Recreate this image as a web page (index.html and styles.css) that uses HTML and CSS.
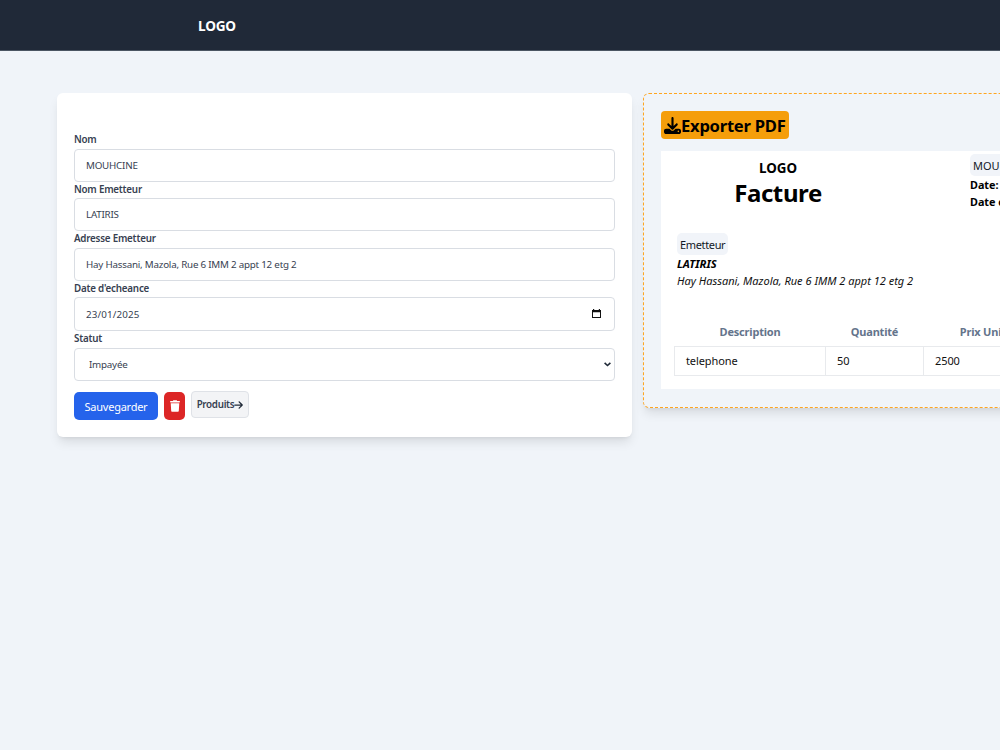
FILE: index.html
```html
<!DOCTYPE html>
<html lang="fr">
<head>
    <meta charset="UTF-8">
    <title>Facture</title>
    <link rel="stylesheet" href="styles.css">
</head>
<body>
    <nav class="navbar">
        <a class="logo">LOGO</a>
    </nav>

    <main class="page">
        <form class="formulaire">
            <label for="nom">Nom</label>
            <input type="text" id="nom" value="MOUHCINE">

            <label for="emetteur">Nom Emetteur</label>
            <input type="text" id="emetteur" value="LATIRIS">

            <label for="adresse">Adresse Emetteur</label>
            <input type="text" id="adresse" value="Hay Hassani, Mazola, Rue 6 IMM 2 appt 12 etg 2">

            <label for="echeance">Date d'echeance</label>
            <div class="champ champ-date">
                <input type="text" id="echeance" value="23/01/2025">
                <svg width="9" height="10" viewBox="0 0 9 10"><path fill="#111" fill-rule="evenodd" d="M1 0h1.200v1h4.600V0H8v1h1v8H0V1h1zM1 3.200V8h7V3.200z"/></svg>
            </div>

            <label for="statut">Statut</label>
            <div class="champ champ-statut">
                <select id="statut">
                    <option>Impayée</option>
                    <option>Payée</option>
                </select>
                <svg width="7" height="5" viewBox="0 0 7 5"><path fill="none" stroke="#1f2937" stroke-width="1.600" d="M.6.8l2.900 2.700L6.400.8"/></svg>
            </div>

            <div class="actions">
                <button type="button" class="btn-save">Sauvegarder</button>
                <button type="button" class="btn-delete">
                    <svg width="10" height="12" viewBox="0 0 448 512"><path fill="#fff" d="M135.200 17.700L128 32H32C14.300 32 0 46.300 0 64s14.300 32 32 32h384c17.700 0 32-14.300 32-32s-14.300-32-32-32h-96l-7.200-14.300C307.400 6.800 296.300 0 284.200 0H163.800c-12.100 0-23.200 6.800-28.600 17.700zM416 128H32l21.200 339c1.600 25.300 22.600 45 47.900 45h245.800c25.300 0 46.300-19.700 47.900-45z"/></svg>
                </button>
                <button type="button" class="btn-produits">Produits<svg width="9" height="10" viewBox="0 0 448 512"><path fill="#1f2937" d="M438.600 278.600c12.500-12.500 12.500-32.800 0-45.300l-160-160c-12.500-12.500-32.800-12.500-45.300 0s-12.500 32.800 0 45.300L338.800 224H32c-17.700 0-32 14.300-32 32s14.300 32 32 32h306.700L233.400 393.400c-12.500 12.500-12.500 32.800 0 45.300s32.800 12.500 45.300 0l160-160z"/></svg></button>
            </div>
        </form>

        <section class="apercu">
            <button type="button" class="btn-export">
                <svg width="17" height="17" viewBox="0 0 512 512"><path d="M288 32c0-17.700-14.300-32-32-32s-32 14.300-32 32v242.700l-73.400-73.400c-12.500-12.500-32.800-12.500-45.300 0s-12.500 32.800 0 45.300l128 128c12.500 12.500 32.800 12.500 45.300 0l128-128c12.500-12.500 12.500-32.800 0-45.300s-32.800-12.500-45.300 0L288 274.700zM64 352c-35.300 0-64 28.700-64 64v32c0 35.300 28.700 64 64 64h384c35.300 0 64-28.700 64-64v-32c0-35.300-28.700-64-64-64H346.500l-45.300 45.300c-25 25-65.500 25-90.500 0L165.500 352zm368 56a24 24 0 1 1 0 48 24 24 0 1 1 0-48z"/></svg><span>Exporter PDF</span>
            </button>

            <div class="facture">
                <header class="entete">
                    <div class="titre">
                        <h3>LOGO</h3>
                        <h1>Facture</h1>
                    </div>
                    <div class="infos">
                        <span class="badge">MOUHCINE</span>
                        <b>Date: 23/01/2025</b>
                        <b>Date d'echeance: 23/01/2025</b>
                    </div>
                </header>

                <div class="emetteur">
                    <span class="badge">Emetteur</span>
                    <strong>LATIRIS</strong>
                    <em>Hay Hassani, Mazola, Rue 6 IMM 2 appt 12 etg 2</em>
                </div>

                <table>
                    <thead>
                        <tr>
                            <th class="col-desc">Description</th>
                            <th class="col-qte">Quantité</th>
                            <th class="col-prix">Prix Unitaire</th>
                            <th>Total</th>
                        </tr>
                    </thead>
                    <tbody>
                        <tr>
                            <td>telephone</td>
                            <td>50</td>
                            <td>2500</td>
                            <td>125000</td>
                        </tr>
                    </tbody>
                </table>
            </div>
        </section>
    </main>
</body>
</html>
```
FILE: styles.css
```css
* {
    box-sizing: border-box;
}
body {
    margin: 0;
    height: 750px;
    overflow: hidden;
    background-color: #f0f4f9;
    font-family: "Noto Sans", "Open Sans", sans-serif;
    color: #000;
}
input, select, button {
    font-family: inherit;
}
h1, h3 {
    margin: 0;
}
svg {
    display: block;
    flex: none;
}
.navbar {
    height: 51px;
    padding-left: 198px;
    display: flex;
    align-items: center;
    background-color: #202938;
    border-bottom: 1px solid #4b5563;
}
.logo {
    color: #fff;
    font-size: 13.6px;
    font-weight: 700;
    letter-spacing: -0.2px;
}
.page {
    display: flex;
    align-items: flex-start;
    gap: 11px;
    width: 1218px;
    padding: 42px 0 0 57px;
}
.formulaire {
    width: 575px;
    height: 344px;
    flex: none;
    padding: 39px 17px 0;
    background: #fff;
    border-radius: 6px;
    box-shadow: 0 7px 11px -2px rgba(0, 0, 0, 0.1), 0 3px 4px -3px rgba(0, 0, 0, 0.1);
}
.formulaire label {
    display: block;
    height: 16.5px;
    line-height: 15px;
    font-size: 9.8px;
    font-weight: 600;
    letter-spacing: -0.22px;
    color: #374151;
}
.formulaire input, .formulaire select {
    display: block;
    width: 100%;
    height: 33px;
    padding: 0 11px;
    border: 1px solid #d9dde3;
    border-radius: 4px;
    background: #fff;
    color: #374151;
    font-size: 9.8px;
    letter-spacing: -0.22px;
}
.formulaire select {
    appearance: none;
    padding: 0 0 0 14px;
}
.champ {
    position: relative;
}
.champ-date input {
    height: 34px;
    letter-spacing: 0.15px;
}
.champ svg {
    position: absolute;
    right: 14px;
    top: 12px;
}
.champ-statut svg {
    right: 4px;
    top: 14px;
}
.actions {
    display: flex;
    align-items: flex-start;
    gap: 6px;
    margin-top: 11px;
}
.actions button {
    display: flex;
    align-items: center;
    justify-content: center;
    padding: 0;
    border: none;
    border-radius: 5px;
    white-space: nowrap;
}
.actions .btn-save {
    width: 84px;
    height: 28px;
    padding-top: 1px;
    background-color: #2563eb;
    color: #fff;
    font-size: 11px;
    letter-spacing: -0.25px;
}
.actions .btn-delete {
    width: 21px;
    height: 28px;
    background-color: #dc2626;
}
.actions .btn-produits {
    width: 58px;
    height: 27px;
    margin-top: -1px;
    padding-top: 1px;
    background-color: #f3f4f6;
    border: 1px solid #dfe2e7;
    border-radius: 4px;
    color: #374151;
    font-size: 9.8px;
    font-weight: 600;
    letter-spacing: -0.3px;
}
.apercu {
    width: 575px;
    height: 315px;
    flex: none;
    padding: 17px;
    border: 1px dashed #ffa51f;
    border-radius: 6px;
    box-shadow: 0 7px 11px -2px rgba(0, 0, 0, 0.1), 0 3px 4px -3px rgba(0, 0, 0, 0.1);
    background-color: #f0f4f9;
}
.btn-export {
    display: flex;
    align-items: center;
    width: 128px;
    height: 28px;
    padding: 1px 0 0 3px;
    border: none;
    border-radius: 4px;
    background-color: #f59e0b;
    color: #000;
    font-size: 16.6px;
    font-weight: 700;
    letter-spacing: -0.25px;
    white-space: nowrap;
}
.facture {
    width: 539px;
    height: 238px;
    margin-top: 12px;
    background: #fff;
}
.entete {
    display: flex;
    height: 82px;
}
.titre {
    width: 309px;
    padding: 8px 75px 0 0;
    text-align: center;
}
.titre h3 {
    font-size: 13.4px;
    line-height: 18px;
}
.titre h1 {
    font-size: 24px;
    line-height: 32px;
    letter-spacing: -0.4px;
}
.infos {
    display: flex;
    flex-direction: column;
    align-items: flex-start;
    padding-top: 3px;
    font-size: 10.8px;
    line-height: 17px;
    white-space: nowrap;
}
.badge {
    height: 22px;
    padding: 0 3px;
    border-radius: 5px;
    background-color: #f1f4f9;
    color: #111827;
    font-size: 11px;
    line-height: 23px;
}
.emetteur {
    display: flex;
    flex-direction: column;
    align-items: flex-start;
    height: 84px;
    padding-left: 16px;
    font-size: 11px;
    line-height: 17px;
}
.emetteur .badge {
    letter-spacing: -0.35px;
}
.emetteur strong {
    font-size: 11.2px;
    font-style: italic;
}
.emetteur em {
    color: #111;
}
table {
    width: 511px;
    margin-left: 13px;
    border-collapse: collapse;
    table-layout: fixed;
    font-size: 11px;
}
th {
    height: 29px;
    padding: 0;
    color: #64748b;
    font-weight: 700;
    letter-spacing: -0.2px;
}
td {
    height: 29px;
    padding: 0 11px;
    border: 1px solid #e8eaed;
    color: #111;
    letter-spacing: -0.1px;
}
.col-desc {
    width: 151px;
}
.col-qte {
    width: 98px;
}
.col-prix {
    width: 139px;
}
```
